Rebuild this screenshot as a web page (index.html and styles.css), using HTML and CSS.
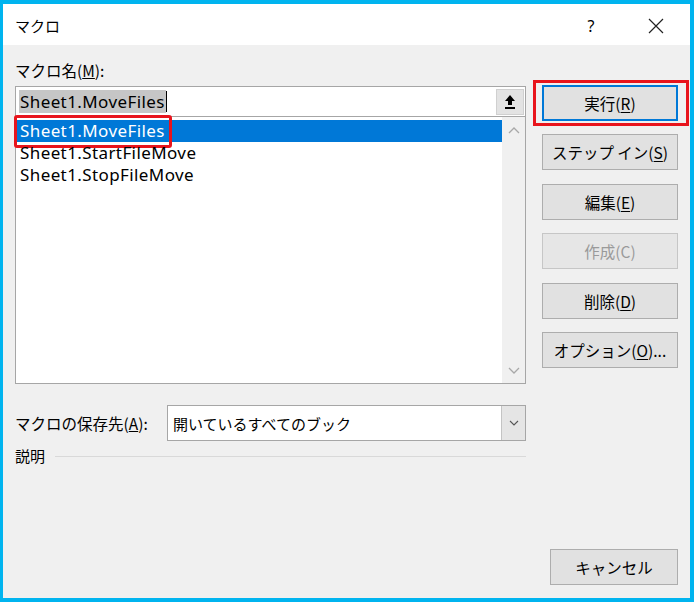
FILE: index.html
```
<!doctype html>
<html lang="ja">

<head>
    <meta charset="UTF-8">
    <title>マクロ</title>
    <link rel="stylesheet" href="styles.css">
</head>

<body>
    <div class="window">
        <div class="titlebar">
            <span class="title">マクロ</span>
            <span class="help">?</span>
            <span class="close">
                <svg width="16" height="16" viewBox="0 0 16 16">
                    <path d="M1 1 L15 15 M15 1 L1 15" stroke="#222" stroke-width="1.2" fill="none" />
                </svg>
            </span>
        </div>

        <div class="content">
            <div class="main">
                <div class="left">
                    <div class="field-label">マクロ名(<u>M</u>):</div>
                    <div class="name-input">
                        <span class="name-text">Sheet1.MoveFiles</span><span class="caret"></span>
                        <span class="up-btn">
                            <svg width="12" height="16" viewBox="0 0 12 16">
                                <path d="M6 1 L11 7 L8 7 L8 11 L4 11 L4 7 L1 7 Z" fill="#000" />
                                <rect x="1" y="13" width="10" height="2" fill="#000" />
                            </svg>
                        </span>
                    </div>
                    <div class="listbox">
                        <ul class="items">
                            <li class="item selected"><span class="mark"></span>Sheet1.MoveFiles</li>
                            <li class="item">Sheet1.StartFileMove</li>
                            <li class="item">Sheet1.StopFileMove</li>
                        </ul>
                        <div class="scrollbar">
                            <svg width="12" height="8" viewBox="0 0 12 8">
                                <path d="M1 7 L6 2 L11 7" stroke="#a8a8a8" stroke-width="1.3" fill="none" />
                            </svg>
                            <svg width="12" height="8" viewBox="0 0 12 8">
                                <path d="M1 1 L6 6 L11 1" stroke="#a8a8a8" stroke-width="1.3" fill="none" />
                            </svg>
                        </div>
                    </div>
                    <div class="store-row">
                        <span class="store-label">マクロの保存先(<u>A</u>):</span>
                        <div class="select">
                            <span class="select-text">開いているすべてのブック</span>
                            <span class="select-btn">
                                <svg width="10" height="6" viewBox="0 0 10 6">
                                    <path d="M1 1 L5 5 L9 1" stroke="#555" stroke-width="1.1" fill="none" />
                                </svg>
                            </span>
                        </div>
                    </div>
                    <div class="desc">
                        <span>説明</span>
                        <span class="rule"></span>
                    </div>
                </div>

                <div class="buttons">
                    <div class="run-wrap">
                        <button class="btn default">実行(<u>R</u>)</button>
                    </div>
                    <button class="btn">ステップ イン(<u>S</u>)</button>
                    <button class="btn">編集(<u>E</u>)</button>
                    <button class="btn" disabled>作成(C)</button>
                    <button class="btn">削除(<u>D</u>)</button>
                    <button class="btn">オプション(<u>O</u>)...</button>
                </div>
            </div>

            <div class="footer">
                <button class="btn cancel">キャンセル</button>
            </div>
        </div>
    </div>
</body>

</html>
```

FILE: styles.css
```
* {
    box-sizing: border-box;
}

body {
    margin: 0;
    font-family: "Noto Sans", "Noto Sans CJK JP", sans-serif;
    font-size: 15px;
    color: #000;
}

.window {
    width: 694px;
    height: 602px;
    border: 4px solid #00b4ef;
    border-left-width: 3px;
    background: #f0f0f0;
    display: flex;
    flex-direction: column;
}

.titlebar {
    height: 41px;
    background: #fff;
    display: flex;
    align-items: center;
    padding-left: 12px;
}

.title {
    flex: 1;
    font-family: "Noto Sans CJK JP", sans-serif;
    font-size: 15px;
    padding-top: 2px;
}

.help {
    width: 20px;
    text-align: center;
    font-size: 16px;
    margin-right: 47px;
    padding-top: 2px;
}

.close {
    display: flex;
    margin-right: 26px;
    margin-top: 2px;
}

.content {
    flex: 1;
    display: flex;
    flex-direction: column;
    padding: 15px 12px 13px 12px;
}

.main {
    display: flex;
    gap: 16px;
}

.left {
    width: 512px;
}

.field-label {
    line-height: 20px;
    height: 20px;
    font-family: "Noto Sans CJK JP", sans-serif;
    font-size: 15.5px;
}

.name-input {
    margin-top: 6px;
    height: 31px;
    background: #fff;
    border: 1px solid #a6a6a6;
    display: flex;
    align-items: center;
    padding-left: 3px;
    padding-right: 1px;
}

.name-text {
    background: #c6c6c6;
    line-height: 23px;
    padding: 0 1px;
    font-size: 17px;
    letter-spacing: 0.4px;
}

.caret {
    width: 1px;
    height: 21px;
    background: #000;
}

.up-btn {
    margin-left: auto;
    width: 28px;
    height: 26px;
    background: #e3e3e3;
    border: 1px solid #d0d0d0;
    display: flex;
    align-items: center;
    justify-content: center;
}

.listbox {
    margin-top: -1px;
    height: 268px;
    background: #fff;
    border: 1px solid #a6a6a6;
    display: flex;
}

.items {
    flex: 1;
    list-style: none;
    margin: 0;
    padding: 3px 0 0 1px;
}

.item {
    position: relative;
    height: 22px;
    line-height: 22px;
    padding-left: 3px;
    font-size: 17px;
    letter-spacing: 0.4px;
}

.item.selected {
    background: #0078d7;
    color: #fff;
}

.mark {
    position: absolute;
    left: -3px;
    top: -5px;
    width: 158px;
    height: 33px;
    border: 3px solid #e8141c;
    border-radius: 3px;
}

.scrollbar {
    width: 23px;
    background: #f0f0f0;
    display: flex;
    flex-direction: column;
    justify-content: space-between;
    align-items: center;
    padding: 9px 0 8px;
}

.store-row {
    margin-top: 21px;
    display: flex;
    align-items: center;
}

.store-label {
    width: 152px;
    font-family: "Noto Sans CJK JP", sans-serif;
    font-size: 15.5px;
}

.select {
    flex: 1;
    height: 36px;
    background: #fff;
    border: 1px solid #a6a6a6;
    display: flex;
    align-items: center;
    padding-left: 5px;
}

.select-text {
    flex: 1;
    font-family: "Noto Sans CJK JP", sans-serif;
}

.select-btn {
    width: 24px;
    height: 100%;
    background: #e5e5e5;
    border-left: 1px solid #c4c4c4;
    display: flex;
    align-items: center;
    justify-content: center;
}

.desc {
    margin-top: 5px;
    display: flex;
    align-items: center;
    gap: 10px;
    line-height: 20px;
    font-family: "Noto Sans CJK JP", sans-serif;
}

.rule {
    flex: 1;
    height: 1px;
    background: #d9d9d9;
}

.buttons {
    width: 136px;
    padding-top: 25px;
    display: flex;
    flex-direction: column;
    gap: 13.4px;
}

.btn {
    width: 136px;
    height: 36px;
    background: #e1e1e1;
    border: 1px solid #adadad;
    font-family: "Noto Sans CJK JP", sans-serif;
    font-size: 15.5px;
    color: #000;
    padding: 0;
}

.btn u {
    text-underline-offset: 2px;
}

.btn.default {
    border: 2px solid #0078d7;
}

.btn:disabled {
    background: #e6e6e6;
    border-color: #c6c6c6;
    color: #9a9a9a;
}

.run-wrap {
    position: relative;
}

.run-wrap::after {
    content: "";
    position: absolute;
    left: -9px;
    right: -11px;
    top: -5px;
    bottom: -5px;
    border: 3px solid #e8141c;
}

.footer {
    margin-top: auto;
    display: flex;
    justify-content: flex-end;
}

.btn.cancel {
    width: 128px;
}
```
